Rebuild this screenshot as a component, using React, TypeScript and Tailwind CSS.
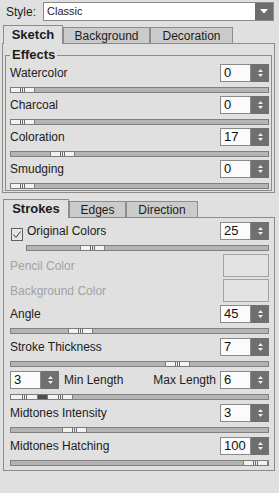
import React from "react"

// Photoshop-style "Sketch" filter options panel

type SliderProps = { pct: number; className?: string }

function Grip() {
  return (
    <div className="flex h-full items-center justify-center gap-[1px]">
      <div className="h-[4px] w-px bg-[#6a6a6a]" />
      <div className="h-[4px] w-px bg-[#6a6a6a]" />
      <div className="h-[4px] w-px bg-[#6a6a6a]" />
    </div>
  )
}

function Slider({ pct, className = "" }: SliderProps) {
  return (
    <div className={`relative h-[6px] border border-[#808080] bg-[#b4b4b4] ${className}`}>
      <div
        className="absolute top-[-1px] h-[6px] w-[25px] border border-[#7c7c7c] bg-[#f2f2f2]"
        style={{ left: `calc((100% - 24px) * ${pct / 100} - 1px)` }}
      >
        <Grip />
      </div>
    </div>
  )
}

function RangeSlider() {
  return (
    <div className="relative mt-[5px] h-[6px] border border-[#808080] bg-[#b4b4b4]">
      <div className="absolute left-[-1px] top-[-1px] flex h-[6px]">
        <div className="h-full w-[28px] border border-[#7c7c7c] bg-[#f2f2f2]">
          <Grip />
        </div>
        <div className="h-full w-[9px] border-y border-[#7c7c7c] bg-[#4e4e4e]" />
        <div className="h-full w-[26px] border border-[#7c7c7c] bg-[#f2f2f2]">
          <Grip />
        </div>
      </div>
    </div>
  )
}

function Spinner() {
  return (
    <div className="flex w-[18px] items-center justify-center bg-[#6f6f6f]">
      <svg width="7" height="10" viewBox="0 0 7 10">
        <path d="M3.5 1 L6 4 H1 Z M3.5 9 L6 6 H1 Z" fill="#eeeeee" />
      </svg>
    </div>
  )
}

function NumberBox({ value }: { value: string }) {
  return (
    <div className="flex h-[18px] w-[49px] shrink-0">
      <div className="w-[31px] border border-[#8a8a8a] bg-[#fbfbfb] pl-[3px] text-[13px] leading-[16px] text-[#111]">
        {value}
      </div>
      <Spinner />
    </div>
  )
}

type RowProps = { label: string; value: string; pct: number; pad: string }

function NumRow({ label, value, pct, pad }: RowProps) {
  return (
    <div className={pad}>
      <div className="flex h-[18px] items-center justify-between">
        <span>{label}</span>
        <NumberBox value={value} />
      </div>
      <Slider pct={pct} className="mt-[5px]" />
    </div>
  )
}

function Swatch({ label, className = "" }: { label: string; className?: string }) {
  return (
    <div className={`flex h-[23px] items-center justify-between ${className}`}>
      <span className="text-[#a2a2a2]">{label}</span>
      <div className="h-[23px] w-[46px] border border-[#a3a3a3] bg-[#e3e3e3]" />
    </div>
  )
}

function Tab({ label, active, width }: { label: string; active?: boolean; width: string }) {
  if (active) {
    return (
      <div
        className={`relative z-10 -mb-px flex h-[19px] items-center justify-center border-x border-t border-[#8c8c8c] bg-[#e0e0e0] text-[13px] font-bold ${width}`}
      >
        {label}
      </div>
    )
  }
  return (
    <div
      className={`flex h-[16px] items-center justify-center border-x border-t border-[#8c8c8c] bg-[#cbcbcb] ${width}`}
    >
      {label}
    </div>
  )
}

const effects = [
  { label: "Watercolor", value: "0", pct: 0 },
  { label: "Charcoal", value: "0", pct: 0 },
  { label: "Coloration", value: "17", pct: 17 },
  { label: "Smudging", value: "0", pct: 0 },
]

export default function App() {
  return (
    <div className="h-[493px] w-[279px] overflow-hidden bg-[#e0e0e0] pt-[2px] font-['Liberation_Sans',Arial,sans-serif] text-[12px] leading-[14px] text-[#1c1c1c]">
      {/* style selector */}
      <div className="flex h-[19px] items-center">
        <span className="ml-[6px] w-[37px]">Style:</span>
        <div className="flex h-[19px] w-[231px] border border-[#8a8a8a] bg-white">
          <span className="flex-1 pl-[3px] text-[11px] leading-[17px]">Classic</span>
          <div className="flex w-[18px] items-center justify-center bg-[#6d6d6d]">
            <svg width="8" height="5" viewBox="0 0 8 5">
              <path d="M0 0 H8 L4 4.5 Z" fill="#ffffff" />
            </svg>
          </div>
        </div>
      </div>

      {/* sketch tabs */}
      <div className="ml-[3px] mt-[4px] flex h-[18px] items-end">
        <Tab label="Sketch" active width="w-[60px]" />
        <Tab label="Background" width="w-[87px]" />
        <Tab label="Decoration" width="w-[83px]" />
      </div>

      <div className="ml-[2px] w-[273px] border border-[#8c8c8c] pb-[1px] pt-[4px]">
        <fieldset className="mx-[2px] border border-[#8c8c8c] pb-[1px] pl-[4px] pr-[2px]">
          <legend className="px-[2px] text-[13px] font-bold leading-[14px]">Effects</legend>
          <div className="mt-[2px]">
            {effects.map((e, i) => (
              <NumRow
                key={e.label}
                label={e.label}
                value={e.value}
                pct={e.pct}
                pad={i < effects.length - 1 ? "pb-[3px]" : ""}
              />
            ))}
          </div>
        </fieldset>
      </div>

      {/* strokes tabs */}
      <div className="ml-[3px] mt-[6px] flex h-[18px] items-end">
        <Tab label="Strokes" active width="w-[66px]" />
        <Tab label="Edges" width="w-[57px]" />
        <Tab label="Direction" width="w-[72px]" />
      </div>

      <div className="ml-[3px] w-[272px] border border-[#8c8c8c] pl-[6px] pr-[5px] pt-[4px]">
        <div className="pb-[3px]">
          <div className="flex h-[18px] items-center justify-between">
            <div className="flex items-center">
              <svg width="12" height="13" viewBox="0 0 12 13" className="ml-[1px] mt-[6px]">
                <rect x="0.5" y="0.5" width="11" height="12" fill="#e6e6e6" stroke="#5e5e5e" />
                <path d="M2.5 6.5 L5 9.5 L9.5 3.5" fill="none" stroke="#3a3a3a" strokeWidth="1" />
              </svg>
              <span className="ml-[4px]">Original Colors</span>
            </div>
            <NumberBox value="25" />
          </div>
          <Slider pct={25} className="ml-[16px] mt-[5px]" />
        </div>

        <Swatch label="Pencil Color" />
        <Swatch label="Background Color" className="mt-[2px]" />

        <div className="mt-[3px]">
          <NumRow label="Angle" value="45" pct={25} pad="pb-[4px]" />
          <NumRow label="Stroke Thickness" value="7" pct={66.7} pad="pb-[4px]" />

          <div className="pb-[4px]">
            <div className="flex h-[18px] items-center justify-between">
              <div className="flex items-center">
                <NumberBox value="3" />
                <span className="ml-[5px]">Min Length</span>
              </div>
              <div className="flex items-center">
                <span className="mr-[4px]">Max Length</span>
                <NumberBox value="6" />
              </div>
            </div>
            <RangeSlider />
          </div>

          <NumRow label="Midtones Intensity" value="3" pct={22.2} pad="pb-[4px]" />
          <NumRow label="Midtones Hatching" value="100" pct={100} pad="pb-[4px]" />
        </div>
      </div>
    </div>
  )
}
